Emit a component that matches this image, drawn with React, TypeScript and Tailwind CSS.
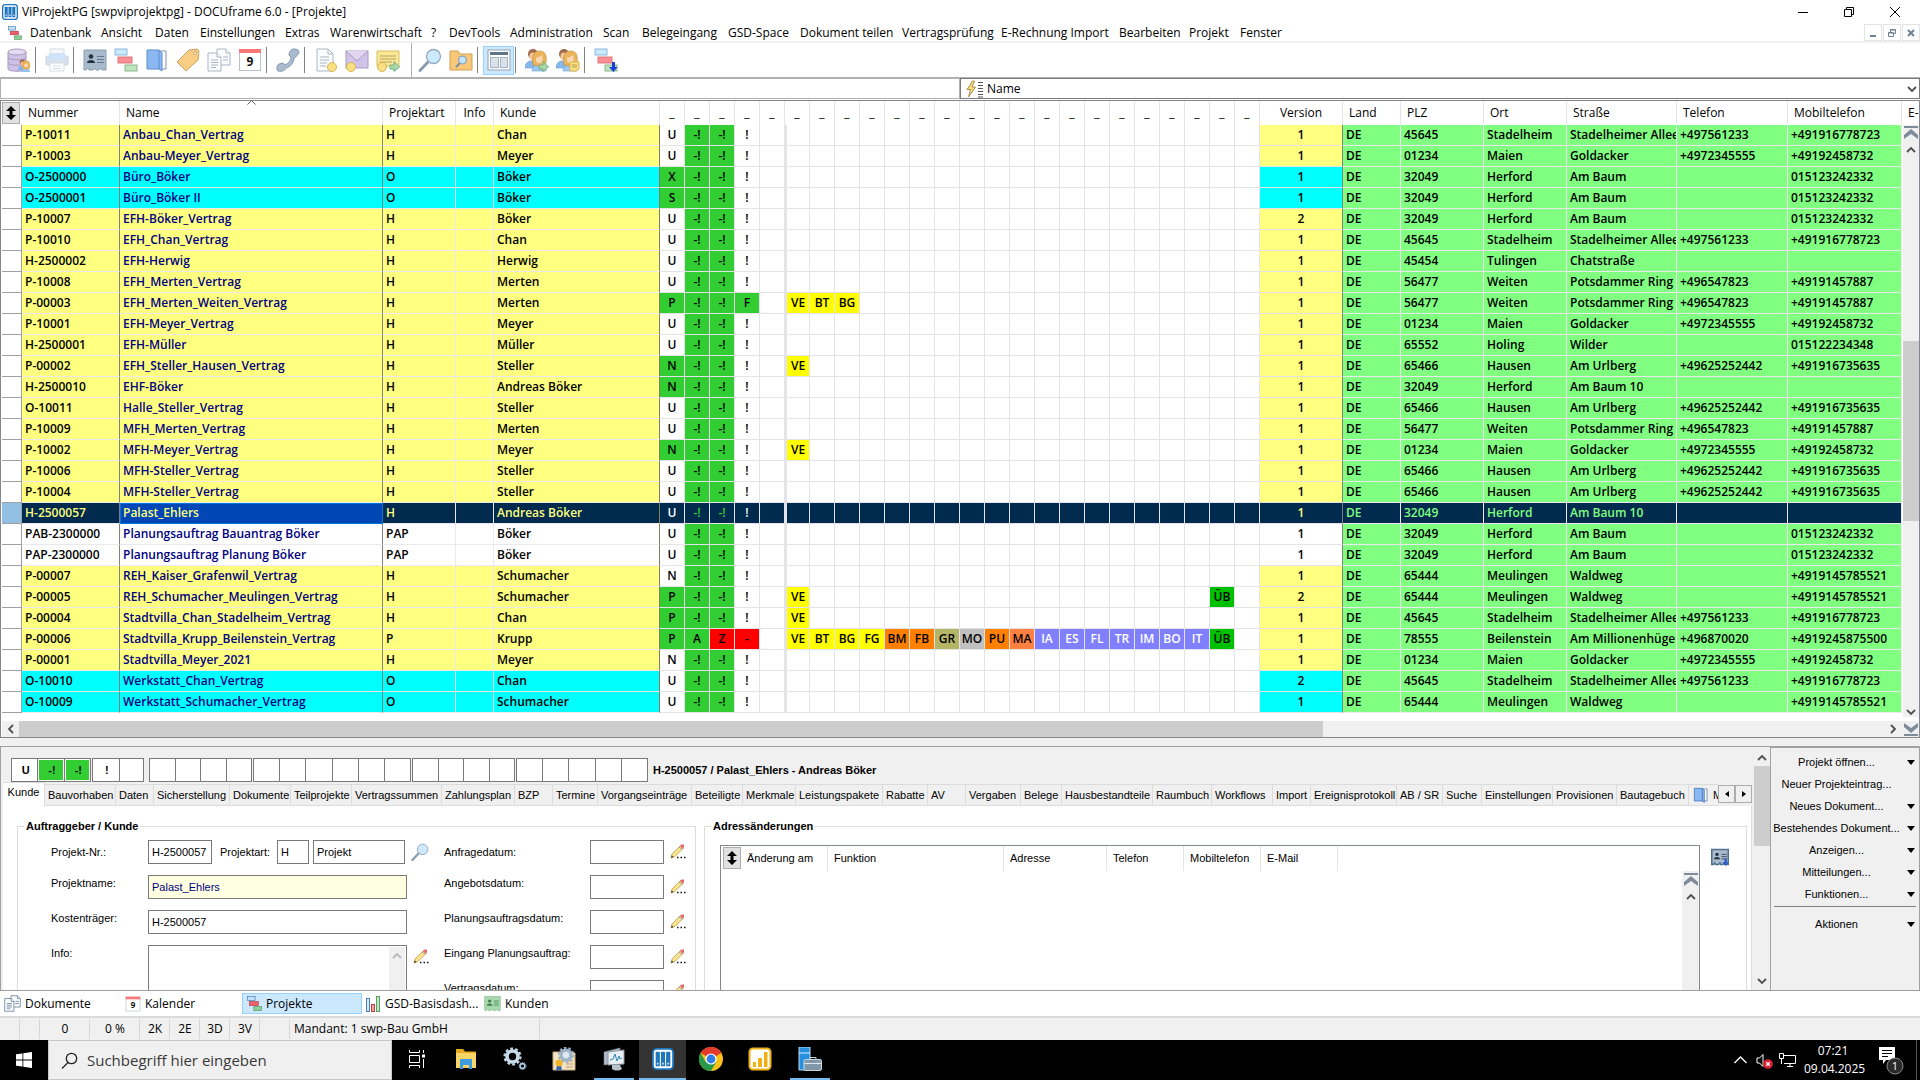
import { useState, type ReactNode } from "react";
import clsx from "clsx";

const SEGOE = "font-['Open_Sans','Noto_Sans',sans-serif]";
const ARIAL = "font-['Liberation_Sans',Arial,sans-serif]";

const MENU = [
  { label: "Datenbank", width: "w-[71px]" },
  { label: "Ansicht", width: "w-[54px]" },
  { label: "Daten", width: "w-[45px]" },
  { label: "Einstellungen", width: "w-[85px]" },
  { label: "Extras", width: "w-[45px]" },
  { label: "Warenwirtschaft", width: "w-[101px]" },
  { label: "?", width: "w-[18px]" },
  { label: "DevTools", width: "w-[61px]" },
  { label: "Administration", width: "w-[93px]" },
  { label: "Scan", width: "w-[39px]" },
  { label: "Belegeingang", width: "w-[86px]" },
  { label: "GSD-Space", width: "w-[72px]" },
  { label: "Dokument teilen", width: "w-[102px]" },
  { label: "Vertragsprüfung", width: "w-[99px]" },
  { label: "E-Rechnung Import", width: "w-[118px]" },
  { label: "Bearbeiten", width: "w-[70px]" },
  { label: "Projekt", width: "w-[51px]" },
  { label: "Fenster", width: "w-[60px]" },
];

type Address = { plz: string; ort: string; strasse: string; tel: string; mobil: string };

const ADDRESSES: Record<string, Address> = {
  chan: { plz: "45645", ort: "Stadelheim", strasse: "Stadelheimer Allee", tel: "+497561233", mobil: "+491916778723" },
  meyer: { plz: "01234", ort: "Maien", strasse: "Goldacker", tel: "+4972345555", mobil: "+49192458732" },
  baum: { plz: "32049", ort: "Herford", strasse: "Am Baum", tel: "", mobil: "015123242332" },
  baum10: { plz: "32049", ort: "Herford", strasse: "Am Baum 10", tel: "", mobil: "" },
  herwig: { plz: "45454", ort: "Tulingen", strasse: "Chatstraße", tel: "", mobil: "" },
  merten: { plz: "56477", ort: "Weiten", strasse: "Potsdammer Ring", tel: "+496547823", mobil: "+49191457887" },
  mueller: { plz: "65552", ort: "Holing", strasse: "Wilder", tel: "", mobil: "015122234348" },
  steller: { plz: "65466", ort: "Hausen", strasse: "Am Urlberg", tel: "+49625252442", mobil: "+491916735635" },
  waldweg: { plz: "65444", ort: "Meulingen", strasse: "Waldweg", tel: "", mobil: "+4919145785521" },
  krupp: { plz: "78555", ort: "Beilenstein", strasse: "Am Millionenhügel", tel: "+496870020", mobil: "+4919245875500" },
};

type Project = {
  nr: string;
  name: string;
  art: string;
  kunde: string;
  // first status; a trailing * marks it as reached (green)
  status: string;
  address: string;
  version?: number;
  rest?: string[];
  phases?: string[];
};

const PROJECTS: Project[] = [
  { nr: "P-10011", name: "Anbau_Chan_Vertrag", art: "H", kunde: "Chan", status: "U", address: "chan" },
  { nr: "P-10003", name: "Anbau-Meyer_Vertrag", art: "H", kunde: "Meyer", status: "U", address: "meyer" },
  { nr: "O-2500000", name: "Büro_Böker", art: "O", kunde: "Böker", status: "X*", address: "baum" },
  { nr: "O-2500001", name: "Büro_Böker II", art: "O", kunde: "Böker", status: "S*", address: "baum" },
  { nr: "P-10007", name: "EFH-Böker_Vertrag", art: "H", kunde: "Böker", status: "U", address: "baum", version: 2 },
  { nr: "P-10010", name: "EFH_Chan_Vertrag", art: "H", kunde: "Chan", status: "U", address: "chan" },
  { nr: "H-2500002", name: "EFH-Herwig", art: "H", kunde: "Herwig", status: "U", address: "herwig" },
  { nr: "P-10008", name: "EFH_Merten_Vertrag", art: "H", kunde: "Merten", status: "U", address: "merten" },
  { nr: "P-00003", name: "EFH_Merten_Weiten_Vertrag", art: "H", kunde: "Merten", status: "P*", address: "merten", rest: ["-!", "-!", "F"], phases: ["VE", "BT", "BG"] },
  { nr: "P-10001", name: "EFH-Meyer_Vertrag", art: "H", kunde: "Meyer", status: "U", address: "meyer" },
  { nr: "H-2500001", name: "EFH-Müller", art: "H", kunde: "Müller", status: "U", address: "mueller" },
  { nr: "P-00002", name: "EFH_Steller_Hausen_Vertrag", art: "H", kunde: "Steller", status: "N*", address: "steller", phases: ["VE"] },
  { nr: "H-2500010", name: "EHF-Böker", art: "H", kunde: "Andreas Böker", status: "N*", address: "baum10" },
  { nr: "O-10011", name: "Halle_Steller_Vertrag", art: "H", kunde: "Steller", status: "U", address: "steller" },
  { nr: "P-10009", name: "MFH_Merten_Vertrag", art: "H", kunde: "Merten", status: "U", address: "merten" },
  { nr: "P-10002", name: "MFH-Meyer_Vertrag", art: "H", kunde: "Meyer", status: "N*", address: "meyer", phases: ["VE"] },
  { nr: "P-10006", name: "MFH-Steller_Vertrag", art: "H", kunde: "Steller", status: "U", address: "steller" },
  { nr: "P-10004", name: "MFH-Steller_Vertrag", art: "H", kunde: "Steller", status: "U", address: "steller" },
  { nr: "H-2500057", name: "Palast_Ehlers", art: "H", kunde: "Andreas Böker", status: "U", address: "baum10" },
  { nr: "PAB-2300000", name: "Planungsauftrag Bauantrag Böker", art: "PAP", kunde: "Böker", status: "U", address: "baum" },
  { nr: "PAP-2300000", name: "Planungsauftrag Planung Böker", art: "PAP", kunde: "Böker", status: "U", address: "baum" },
  { nr: "P-00007", name: "REH_Kaiser_Grafenwil_Vertrag", art: "H", kunde: "Schumacher", status: "N", address: "waldweg" },
  { nr: "P-00005", name: "REH_Schumacher_Meulingen_Vertrag", art: "H", kunde: "Schumacher", status: "P*", address: "waldweg", version: 2, phases: ["VE", "ÜB"] },
  { nr: "P-00004", name: "Stadtvilla_Chan_Stadelheim_Vertrag", art: "H", kunde: "Chan", status: "P*", address: "chan", phases: ["VE"] },
  {
    nr: "P-00006", name: "Stadtvilla_Krupp_Beilenstein_Vertrag", art: "P", kunde: "Krupp", status: "P*", address: "krupp", rest: ["A", "Z", "-"],
    phases: ["VE", "BT", "BG", "FG", "BM", "FB", "GR", "MO", "PU", "MA", "IA", "ES", "FL", "TR", "IM", "BO", "IT", "ÜB"],
  },
  { nr: "P-00001", name: "Stadtvilla_Meyer_2021", art: "H", kunde: "Meyer", status: "N", address: "meyer" },
  { nr: "O-10010", name: "Werkstatt_Chan_Vertrag", art: "O", kunde: "Chan", status: "U", address: "chan", version: 2 },
  { nr: "O-10009", name: "Werkstatt_Schumacher_Vertrag", art: "O", kunde: "Schumacher", status: "U", address: "waldweg" },
];

const PHASES = ["VE", "BT", "BG", "FG", "BM", "FB", "GR", "MO", "PU", "MA", "IA", "ES", "FL", "TR", "IM", "BO", "IT", "ÜB", ""];

const PHASE_COLORS: Record<string, string> = {
  VE: "bg-[#ffff00]", BT: "bg-[#ffff00]", BG: "bg-[#ffff00]", FG: "bg-[#ffff00]",
  BM: "bg-[#ff8000]", FB: "bg-[#ff8000]", GR: "bg-[#b5b566]", MO: "bg-[#c0c0c0]",
  PU: "bg-[#ff8000]", MA: "bg-[#ff8040]",
  IA: "bg-[#8080ff] text-white", ES: "bg-[#8080ff] text-white", FL: "bg-[#8080ff] text-white",
  TR: "bg-[#8080ff] text-white", IM: "bg-[#8080ff] text-white", BO: "bg-[#8080ff] text-white",
  IT: "bg-[#8080ff] text-white", "ÜB": "bg-[#00c000]",
};

const STATUS_COLORS: Record<string, string> = {
  "-!": "bg-[#32cd32]", A: "bg-[#32cd32]", F: "bg-[#32cd32]", Z: "bg-[#ff0000]", "-": "bg-[#ff0000]",
};

const TABS = [
  { label: "Bauvorhaben", width: "w-[71px]" },
  { label: "Daten", width: "w-[38px]" },
  { label: "Sicherstellung", width: "w-[76px]" },
  { label: "Dokumente", width: "w-[61px]" },
  { label: "Teilprojekte", width: "w-[61px]" },
  { label: "Vertragssummen", width: "w-[90px]" },
  { label: "Zahlungsplan", width: "w-[73px]" },
  { label: "BZP", width: "w-[38px]" },
  { label: "Termine", width: "w-[45px]" },
  { label: "Vorgangseinträge", width: "w-[94px]" },
  { label: "Beteiligte", width: "w-[51px]" },
  { label: "Merkmale", width: "w-[53px]" },
  { label: "Leistungspakete", width: "w-[87px]" },
  { label: "Rabatte", width: "w-[45px]" },
  { label: "AV", width: "w-[38px]" },
  { label: "Vergaben", width: "w-[55px]" },
  { label: "Belege", width: "w-[41px]" },
  { label: "Hausbestandteile", width: "w-[91px]" },
  { label: "Raumbuch", width: "w-[59px]" },
  { label: "Workflows", width: "w-[61px]" },
  { label: "Import", width: "w-[38px]" },
  { label: "Ereignisprotokoll", width: "w-[86px]" },
  { label: "AB / SR", width: "w-[46px]" },
  { label: "Suche", width: "w-[39px]" },
  { label: "Einstellungen", width: "w-[71px]" },
  { label: "Provisionen", width: "w-[64px]" },
  { label: "Bautagebuch", width: "w-[72px]" },
];

/* ---------- icons ---------- */

type IconProps = { size?: number; children: ReactNode; box?: number };

const Icon = ({ size = 24, box = 24, children }: IconProps) => (
  <svg width={size} height={size} viewBox={`0 0 ${box} ${box}`} fill="none" className="shrink-0">
    {children}
  </svg>
);

const ProjectsShape = ({ arrow = false, strong = false }) => (
  <>
    <rect x="1" y="1" width="12" height="6" fill={strong ? "#bfe0f8" : "#c8e9fb"} stroke={strong ? "#3c78b4" : "#8fb8d8"} />
    <rect x="4" y="9" width="14" height="6" fill={strong ? "#f06068" : "#fb8e92"} stroke={strong ? "#b03038" : "#d8797d"} />
    <rect x="11" y="17" width="12" height="6" fill={strong ? "#90d098" : "#bde3bf"} stroke={strong ? "#409050" : "#8bb78e"} />
    {arrow && <path d="M18 14h3v5h2.500L19.500 24 15 19h3z" fill="#1a3fd8" />}
  </>
);

const ProjectsIcon = ({ size = 24, arrow = false, strong = false }) => (
  <Icon size={size}>
    <ProjectsShape arrow={arrow} strong={strong} />
  </Icon>
);

const BookIcon = ({ size = 24, strong = false }) => (
  <Icon size={size}>
    <path d="M14 3h7v18h-7z" fill="#fdfdfd" stroke={strong ? "#4a6890" : "#7e93ad"} />
    <path d="M2 2h12l3 3v18l-3-2H2z" fill="#8bb8f3" stroke={strong ? "#2f66b4" : "#5f8ccc"} />
    <path d="M14 2v19" stroke={strong ? "#2f66b4" : "#5f8ccc"} />
  </Icon>
);

const DocsIcon = ({ size = 24, strong = false }) => (
  <Icon size={size}>
    <g stroke={strong ? "#54708f" : "#a9b5c3"} fill="#fbfcfd">
      <path d="M10 1h9l4 4v12H10z" />
      <path d="M19 1v4h4M16 9h5M16 12h5" />
      <path d="M1 5h9l4 4v14H1z" />
      <path d="M10 5v4h4M4 12h7M4 14.500h7M4 17h7M4 19.500h5" />
    </g>
  </Icon>
);

const CalendarIcon = ({ size = 24 }) => (
  <Icon size={size}>
    <rect x="1.500" y="1.500" width="21" height="21" fill="#fff" stroke="#b9c2cc" />
    <rect x="1" y="1" width="22" height="4" fill="#f87878" />
    <text x="12" y="18" textAnchor="middle" fontSize="12" fontWeight="700" fontFamily="Open Sans" fill="#111">9</text>
  </Icon>
);

const CardIcon = ({ size = 24, green = false, strong = false }) => {
  const ink = green ? "#3b8048" : "#26323f";
  const edge = green ? "#88bd90" : strong ? "#50708f" : "#8c9fb5";
  return (
    <Icon size={size}>
      <path d="M1 2h22v20h-4l-1-2-2 2h-3l-1-2-2 2H6l-1-2-2 2H1z" fill={green ? "#a8d8ae" : "#a9bacd"} stroke={edge} strokeWidth={strong ? 2 : 1} />
      <circle cx="8" cy="8.500" r="2.300" fill={ink} />
      <path d="M4 15c0-4 8-4 8 0z" fill={ink} />
      <path d="M14 8.500h7M14 11.500h7M14 14.500h7" stroke={green || strong ? ink : "#66788d"} />
      {strong && <path d="M18 14h3v5h2.500L19.500 24 15 19h3z" fill="#2a5fd0" />}
    </Icon>
  );
};

const MagnifierIcon = ({ size = 24 }) => (
  <Icon size={size}>
    <path d="M10 14L2 22.500" stroke="#8b9cb0" strokeWidth="3" strokeLinecap="round" />
    <circle cx="15.500" cy="8.500" r="7" fill="#cdeafd" stroke="#93aabf" strokeWidth="1.300" />
  </Icon>
);

const PencilIcon = () => (
  <Icon size={16} box={16}>
    <path d="M1 14l1-4L10.500 1.500l3 2.500L5 12.500z" fill="#fbe38b" stroke="#b59d57" strokeWidth=".8" />
    <path d="M10 2l1.500-1.500h2.500V3l-1.500 2z" fill="#e46b70" />
    <path d="M9 3l3 2.500" stroke="#98a8b8" />
    <path d="M1 14l.8-2.500L3.500 13z" fill="#333" />
    <path d="M7 13.500h1.500M10.500 13.500H12M14 13.500h1.500" stroke="#111" strokeWidth="1.600" />
  </Icon>
);

const PeopleShape = () => (
  <>
    <path d="M0 20c0-4 2-6.500 5-7h5v7z" fill="#86b8ec" stroke="#6c9fd4" strokeWidth=".6" />
    <circle cx="8" cy="6" r="5" fill="#a0684a" />
    <ellipse cx="7.500" cy="8.500" rx="3" ry="4" fill="#f3c9a0" />
    <path d="M7 23c0-4 2-6 7-6s7 2 7 6z" fill="#9cc8f4" stroke="#6c9fd4" strokeWidth=".6" />
    <path d="M8 17C7 10 7 3 14.500 3S22 10 20.500 17l-4 1h-4z" fill="#eab45c" stroke="#c08c40" strokeWidth=".6" />
    <path d="M11 10c1-1 4-1 6-3 1 3 1 8-2.500 8S11 13 11 10z" fill="#f8d8b4" />
  </>
);

const Coin = ({ x, y }: { x: number; y: number }) => <circle cx={x} cy={y} r="4.500" fill="#fbe083" stroke="#d3b453" />;
const GreenArrow = () => <path d="M14 17h4v-3.500l5.500 5.500-5.500 4.500V21h-4z" fill="#a6d8aa" stroke="#78ae7e" />;

const DatabaseIcon = () => (
  <Icon>
    <path d="M1 4v17c0 3 18 3 18 0V4z" fill="#d0c1e6" stroke="#a99abf" />
    <ellipse cx="10" cy="4" rx="9" ry="3" fill="#e4dbf2" stroke="#a99abf" />
    <path d="M1 9.500c0 3 18 3 18 0M1 15c0 3 18 3 18 0" stroke="#a99abf" />
    <g transform="translate(11 11) scale(.56)"><PeopleShape /></g>
  </Icon>
);

const PrinterIcon = () => (
  <Icon>
    <path d="M5 1h14v8H5z" fill="#f6f8fa" stroke="#d4dae1" />
    <rect x="1" y="8" width="22" height="9" rx="1.500" fill="#d9e1ea" stroke="#c6d0da" />
    <rect x="4" y="5" width="16" height="7" fill="#cfe4fa" />
    <path d="M5 15h14v8H5z" fill="#fff" stroke="#d4dae1" />
    <path d="M8 18h8M8 20.500h8" stroke="#d4dae1" />
  </Icon>
);

const TagIcon = () => (
  <Icon>
    <path d="M1 14L13 2l8-1 2 2-1 9-12 11z" fill="#f8ce84" stroke="#c9a25f" />
    <circle cx="19" cy="5" r="1.500" fill="#fff" stroke="#c9a25f" />
  </Icon>
);

const PhoneIcon = () => (
  <Icon>
    <path d="M2 23c-2-3-1-6 1-7l4-1 2 2C13 15 15 12 15 9l-2-2c0-3 2-6 5-6 3 0 5 1 5 3-1 3-3 5-5 6 0 5-4 9-8 10-1 2-3 4-8 3z" fill="#a9bccf" stroke="#8397ab" />
  </Icon>
);

const NewDocIcon = () => (
  <Icon>
    <path d="M3 1h11l5 5v17H3z" fill="#fbfcfd" stroke="#a9b5c3" />
    <path d="M14 1v5h5M6 9h9M6 12h9M6 15h7M6 18h6" stroke="#a9b5c3" />
    <Coin x={18} y={19} />
  </Icon>
);

const MailIcon = () => (
  <Icon>
    <rect x="1" y="3" width="22" height="17" fill="#d2c4e8" stroke="#a99abf" />
    <path d="M1 3l11 10L23 3" stroke="#a99abf" fill="#e0d6f0" />
    <Coin x={6} y={19} />
  </Icon>
);

const NoteIcon = () => (
  <Icon>
    <path d="M1 3h22v15H1z" fill="#fbe795" stroke="#d6be62" />
    <path d="M4 8h16M4 11h16M4 14h12" stroke="#b7a35c" />
    <Coin x={6} y={19} />
    <GreenArrow />
  </Icon>
);

const FolderIcon = () => (
  <Icon>
    <path d="M1 3h8l2 3h12v16H1z" fill="#f8c878" stroke="#cf9f54" />
    <path d="M11 15l-4 4" stroke="#7890a8" strokeWidth="2" />
    <circle cx="13.500" cy="12" r="4" fill="#c4e4fb" stroke="#7e9cb8" />
  </Icon>
);

const LayoutIcon = () => (
  <Icon>
    <rect x="1" y="2" width="22" height="20" fill="#fff" stroke="#8fa2b5" />
    <rect x="3" y="4" width="18" height="3" fill="#5f7388" />
    <rect x="3.500" y="9.500" width="8" height="10" fill="#d9e2ea" stroke="#a6b4c2" />
    <rect x="13.500" y="9.500" width="7" height="10" fill="#d9e2ea" stroke="#a6b4c2" />
  </Icon>
);

const PeopleArrowIcon = () => <Icon><PeopleShape /><GreenArrow /></Icon>;
const PeopleNoteIcon = () => (
  <Icon>
    <PeopleShape />
    <path d="M14 14h9v7l-3 2h-6z" fill="#fbe083" stroke="#d3b453" />
    <path d="M16 17h5M16 19h5" stroke="#b79c48" />
  </Icon>
);

const BinderIcon = ({ size = 24 }) => (
  <Icon size={size}>
    <rect x="1" y="1" width="22" height="22" rx="4" fill="#fff" stroke="#1f76bd" strokeWidth="2" />
    <rect x="4" y="4" width="4.600" height="16" rx="1" fill="#1f76bd" />
    <rect x="9.700" y="4" width="4.600" height="16" rx="1" fill="#1f76bd" />
    <rect x="15.400" y="4" width="4.600" height="16" rx="1" fill="#1f76bd" />
    <path d="M6.300 16v2M12 16v2M17.700 16v2" stroke="#fff" strokeWidth="1.500" />
  </Icon>
);

const ChartIcon = () => (
  <Icon size={16} box={16}>
    <rect x="1.500" y="2.500" width="3" height="13" fill="#d8e8fa" stroke="#4a80b8" />
    <rect x="6.500" y="8.500" width="3" height="7" fill="#f8a0a4" stroke="#b84048" />
    <rect x="11.500" y=".5" width="3" height="15" fill="#c0e4c4" stroke="#58a064" />
  </Icon>
);

const Chevron = ({ dir, color = "#505050" }: { dir: "up" | "down" | "left" | "right"; color?: string }) => {
  const d = { up: "M1 7l4-4 4 4", down: "M1 3l4 4 4-4", left: "M7 1L3 5l4 4", right: "M3 1l4 4-4 4" }[dir];
  return (
    <svg width="10" height="10" viewBox="0 0 10 10" fill="none" className="shrink-0">
      <path d={d} stroke={color} strokeWidth="1.800" />
    </svg>
  );
};

const DoubleChevron = ({ down = false }) => (
  <svg width="16" height="16" viewBox="0 0 16 16" fill="#7d8b9b" className={clsx("shrink-0", down && "rotate-180")}>
    <path d="M1 1h14v2H1zM8 4l7 6v4L8 9l-7 5v-4z" />
  </svg>
);

const SortButton = () => (
  <button aria-label="Sortierung" className="flex h-[22px] w-[18px] items-center justify-center border border-[#adadad] bg-[#e1e1e1]">
    <svg width="10" height="14" viewBox="0 0 10 14"><path d="M5 0l5 5H6.500v4H10l-5 5-5-5h3.500V5H0z" fill="#000" /></svg>
  </button>
);

/* ---------- window chrome ---------- */

function TitleBar() {
  return (
    <header className="flex h-6 items-center pr-5 pl-[2px] text-xs">
      <BinderIcon size={16} />
      <h1 className="ml-1 flex-1">ViProjektPG [swpviprojektpg] - DOCUframe 6.0 - [Projekte]</h1>
      <div className="flex gap-9">
        <button aria-label="Minimieren">
          <svg width="10" height="10" stroke="#000"><path d="M0 5.500h10" /></svg>
        </button>
        <button aria-label="Verkleinern">
          <svg width="10" height="10" stroke="#000" fill="none"><path d="M.5 2.500h7v7h-7zM2.500 2V.5h7v7H8" /></svg>
        </button>
        <button aria-label="Schließen">
          <svg width="10" height="10" stroke="#000"><path d="M0 0l10 10M10 0L0 10" /></svg>
        </button>
      </div>
    </header>
  );
}

function MenuBar() {
  const mdi = "flex h-[17px] w-[18px] items-center justify-center border border-[#e4e4e4]";
  return (
    <nav className="flex h-[19px] items-center border-b-2 border-[#f0f0f0] pl-2 text-xs">
      <ProjectsIcon size={14} strong />
      <div className="ml-2 flex flex-1">
        {MENU.map(item => (
          <button key={item.label} className={clsx("text-left whitespace-nowrap", item.width)}>{item.label}</button>
        ))}
      </div>
      <div className="flex gap-[1px] text-[#6f8190]">
        <button aria-label="Fenster minimieren" className={mdi}>
          <svg width="8" height="8" fill="currentColor"><path d="M1 6h6v2H1z" /></svg>
        </button>
        <button aria-label="Fenster verkleinern" className={mdi}>
          <svg width="8" height="8" stroke="currentColor" fill="none"><path d="M.5 3.500h5v4h-5zM.5 4h5M2.500 3V.5h5v4H6M2.500 1h5" /></svg>
        </button>
        <button aria-label="Fenster schließen" className={mdi}>
          <svg width="8" height="8" stroke="currentColor" strokeWidth="2"><path d="M1 1l6 6M7 1L1 7" /></svg>
        </button>
      </div>
    </nav>
  );
}

const ToolButton = ({ label, active, children }: { label: string; active?: boolean; children: ReactNode }) => (
  <button
    aria-label={label}
    className={clsx("flex h-[29px] w-[31px] items-center justify-center", active && "border border-[#99d1ff] bg-[#cce8ff]")}
  >
    {children}
  </button>
);

const ToolSeparator = () => <div className="mr-[5px] ml-[1px] h-[26px] border-l border-[#808080]" />;

function Toolbar() {
  return (
    <div className="flex h-[34px] items-center pl-[3px]">
      <ToolButton label="Datenbank"><DatabaseIcon /></ToolButton>
      <ToolSeparator />
      <ToolButton label="Drucken"><PrinterIcon /></ToolButton>
      <ToolSeparator />
      <ToolButton label="Adressen"><CardIcon /></ToolButton>
      <ToolButton label="Projekte"><ProjectsIcon /></ToolButton>
      <ToolButton label="Buch"><BookIcon /></ToolButton>
      <ToolButton label="Artikel"><TagIcon /></ToolButton>
      <ToolButton label="Dokumente"><DocsIcon /></ToolButton>
      <ToolButton label="Kalender"><CalendarIcon /></ToolButton>
      <ToolSeparator />
      <ToolButton label="Telefon"><PhoneIcon /></ToolButton>
      <ToolSeparator />
      <ToolButton label="Neues Dokument"><NewDocIcon /></ToolButton>
      <ToolButton label="Neue E-Mail"><MailIcon /></ToolButton>
      <ToolButton label="Neue Notiz"><NoteIcon /></ToolButton>
      <div className="mr-[2px] ml-2 h-full border-l border-[#b0b0b0]" />
      <ToolButton label="Suchen"><MagnifierIcon /></ToolButton>
      <ToolButton label="Ordner suchen"><FolderIcon /></ToolButton>
      <ToolSeparator />
      <ToolButton label="Ansicht" active><LayoutIcon /></ToolButton>
      <ToolSeparator />
      <ToolButton label="Weiterleiten"><PeopleArrowIcon /></ToolButton>
      <ToolButton label="Notiz an Kontakt"><PeopleNoteIcon /></ToolButton>
      <ToolSeparator />
      <ToolButton label="Projekt ablegen"><ProjectsIcon arrow /></ToolButton>
    </div>
  );
}

function SearchRow() {
  const [query, setQuery] = useState("");
  return (
    <div className="flex h-[22px] border-t border-[#b0b0b0]">
      <input
        aria-label="Suchbegriff"
        value={query}
        onChange={e => setQuery(e.target.value)}
        className="w-1/2 border border-[#b0b0b0] px-2 text-xs outline-none"
      />
      <div className="flex w-1/2 items-center border border-[#7a7a7a] pr-[2px] pl-[5px]">
        <svg width="18" height="18" viewBox="0 0 18 18">
          <path d="M6.500 1L1 9.500h3.500L2.500 17 9.500 7H6L8.500 1z" fill="#fbdc7c" stroke="#a88f4d" />
          <path d="M12 2.500h5M12 5.500h5M12 8.500h5M12 11.500h5M12 14.500h5M12 17h5" stroke="#555" />
        </svg>
        <select aria-label="Suchfeld" className="h-full flex-1 appearance-none bg-transparent pl-[3px] text-xs outline-none">
          <option>Name</option>
        </select>
        <Chevron dir="down" />
      </div>
    </div>
  );
}

/* ---------- project table ---------- */

const TH = "relative h-6 overflow-hidden border-r border-[#e5e5e5] px-[6px] text-left font-normal whitespace-nowrap";
const THC = "h-6 overflow-hidden border-r border-[#e5e5e5] p-0 text-center font-normal whitespace-nowrap";
const TD = "h-[21px] overflow-hidden border-r border-b border-[#ebe9ed] p-0 pl-[3px] whitespace-nowrap";
const TDC = "h-[21px] overflow-hidden border-r border-b border-[#e3e3e8] p-0 text-center whitespace-nowrap";

function ProjectRow({ project, selected, onSelect }: { project: Project; selected: boolean; onSelect: () => void }) {
  const address = ADDRESSES[project.address];
  const plain = project.art === "PAP";
  const blue = project.art === "O";
  const left = selected ? "bg-[#002b4f] text-[#ffff80]" : plain ? "bg-white" : blue ? "bg-[#00ffff]" : "bg-[#ffff80]";
  const right = selected ? "bg-[#002b4f] text-[#80ff80]" : "bg-[#80ff80]";
  const first = project.status.replace("*", "");
  const firstDone = project.status.endsWith("*");
  const rest = project.rest ?? ["-!", "-!", "!"];

  return (
    <tr onClick={onSelect}>
      <td className={clsx("h-[21px] border-r border-b border-[#a0a0a0] p-0", selected ? "bg-[#92c0e4]" : "bg-white")} />
      <td className={clsx(TD, left, "border-r-[#808080]")}>{project.nr}</td>
      <td
        className={clsx(
          TD,
          "border-r-[#808080]",
          selected ? "bg-[#0046b4] text-[#ffff80] outline-1 -outline-offset-1 outline-[#0078d7]" : [left, "text-[#000080]"]
        )}
      >
        {project.name}
      </td>
      <td className={clsx(TD, left)}>{project.art}</td>
      <td className={clsx(TD, left)} />
      <td className={clsx(TD, left, "border-r-[#808060]")}>{project.kunde}</td>
      <td className={clsx(TDC, firstDone ? "bg-[#32cd32]" : selected ? "bg-[#002b4f] text-white" : "bg-white")}>{first}</td>
      {rest.map((s, i) => (
        <td
          key={i}
          className={clsx(TDC, selected ? ["bg-[#002b4f]", s === "-!" ? "text-[#32cd32]" : "text-white"] : STATUS_COLORS[s])}
        >
          {s}
        </td>
      ))}
      <td className={clsx(TDC, selected && "bg-[#002b4f]")} />
      {PHASES.map((phase, i) => {
        const reached = phase !== "" && project.phases?.includes(phase);
        return (
          <td
            key={i}
            className={clsx(TDC, i === 0 && "border-l-2", selected && "bg-[#002b4f]", reached && PHASE_COLORS[phase])}
          >
            {reached ? phase : ""}
          </td>
        );
      })}
      <td className={clsx(TDC, left, "border-r-[#808080]")}>{project.version ?? 1}</td>
      <td className={clsx(TD, right)}>DE</td>
      <td className={clsx(TD, right)}>{address.plz}</td>
      <td className={clsx(TD, right)}>{address.ort}</td>
      <td className={clsx(TD, right)}>{address.strasse}</td>
      <td className={clsx(TD, right)}>{address.tel}</td>
      <td className={clsx(TD, right)}>{address.mobil}</td>
      <td />
    </tr>
  );
}

function ProjectTable() {
  const [selected, setSelected] = useState("H-2500057");
  return (
    <section className="relative mt-[1px] shrink-0 overflow-hidden border border-[#828790] pl-[1px]">
      <table className="w-[1936px] table-fixed border-separate border-spacing-0 text-xs">
        <colgroup>
          <col className="w-[20px]" />
          <col className="w-[98px]" />
          <col className="w-[263px]" />
          <col className="w-[73px]" />
          <col className="w-[38px]" />
          <col className="w-[166px]" />
          {[0, 1, 2, 3, 4].map(i => <col key={i} className="w-[25px]" />)}
          {PHASES.map((_, i) => <col key={i} className="w-[25px]" />)}
          <col className="w-[83px]" />
          <col className="w-[58px]" />
          <col className="w-[83px]" />
          <col className="w-[83px]" />
          <col className="w-[110px]" />
          <col className="w-[111px]" />
          <col className="w-[114px]" />
          <col />
        </colgroup>
        <thead>
          <tr>
            <th className="h-6 p-0"><SortButton /></th>
            <th className={TH}>Nummer</th>
            <th className={TH}>
              <span className="absolute inset-x-0 -top-[2px] flex justify-center">
                <svg width="9" height="6" viewBox="0 0 9 6" fill="none" stroke="#606060"><path d="M.5 5.500l4-4 4 4" /></svg>
              </span>
              Name
            </th>
            <th className={TH}>Projektart</th>
            <th className={THC}>Info</th>
            <th className={TH}>Kunde</th>
            {[0, 1, 2, 3, 4].map(i => <th key={i} className={THC}>_</th>)}
            {PHASES.map((_, i) => <th key={i} className={THC}>_</th>)}
            <th className={THC}>Version</th>
            <th className={TH}>Land</th>
            <th className={TH}>PLZ</th>
            <th className={TH}>Ort</th>
            <th className={TH}>Straße</th>
            <th className={TH}>Telefon</th>
            <th className={TH}>Mobiltelefon</th>
            <th className={TH}>E-Mail</th>
          </tr>
        </thead>
        <tbody className="font-semibold">
          {PROJECTS.map(p => (
            <ProjectRow key={p.nr} project={p} selected={p.nr === selected} onSelect={() => setSelected(p.nr)} />
          ))}
        </tbody>
      </table>

      {/* vertical scrollbar lies over the last column */}
      <div className="absolute top-6 right-0 bottom-5 flex w-4 flex-col items-center justify-between bg-[#f0f0f0]">
        <div className="flex flex-col items-center gap-1">
          <DoubleChevron />
          <Chevron dir="up" />
        </div>
        <div className="absolute top-[216px] h-[180px] w-full bg-[#cdcdcd]" />
        <Chevron dir="down" />
      </div>

      <div className="mt-2 flex h-4 items-center bg-[#f0f0f0]">
        <div className="flex w-[17px] justify-center"><Chevron dir="left" /></div>
        <div className="h-full w-[68%] bg-[#cdcdcd]" />
        <div className="flex-1" />
        <Chevron dir="right" />
        <div className="ml-[5px]"><DoubleChevron down /></div>
      </div>
    </section>
  );
}

/* ---------- detail panel ---------- */

const STATUS_GROUPS = [
  { cells: ["", "", "", ""], width: "w-[103px]" },
  { cells: ["", "", "", "", "", ""], width: "w-[158px]" },
  { cells: ["", "", "", ""], width: "w-[103px]" },
  { cells: ["", "", "", "", ""], width: "w-[132px]" },
];

function StatusStrip() {
  return (
    <div className="flex h-6 pl-2 text-[11px] font-bold">
      <div className="mr-[1px] flex w-[80px] border border-[#7a7a7a] bg-white">
        <span className="flex-1 pl-[2px] text-center leading-[22px]">U</span>
        <span className="flex-1 border-l border-[#7a7a7a] p-[1px]"><span className="block h-full bg-[#32cd32] pl-[2px] text-center leading-5">-!</span></span>
        <span className="flex-1 border-l border-[#7a7a7a] p-[1px]"><span className="block h-full bg-[#32cd32] pl-[2px] text-center leading-5">-!</span></span>
      </div>
      <div className="mr-[5px] flex w-[52px] border border-[#7a7a7a] bg-white">
        <span className="flex-1 pl-[2px] text-center leading-[22px]">!</span>
        <span className="flex-1 border-l border-[#7a7a7a]" />
      </div>
      {STATUS_GROUPS.map((group, g) => (
        <div key={g} className={clsx("mr-[1px] flex divide-x divide-[#7a7a7a] border border-[#7a7a7a] bg-white", group.width)}>
          {group.cells.map((_, i) => <span key={i} className="flex-1" />)}
        </div>
      ))}
      <h2 className="ml-1 leading-6">H-2500057 / Palast_Ehlers - Andreas Böker</h2>
    </div>
  );
}

function TabBar() {
  const arrow = "mb-[3px] flex h-[18px] w-[17px] shrink-0 items-center justify-center border border-[#adadad]";
  return (
    <div className="flex h-6 items-end overflow-hidden text-[11px]">
      <button className="h-6 w-[42px] shrink-0 border-t border-r border-[#dcdcdc] bg-white pb-1 text-center">Kunde</button>
      {TABS.map(tab => (
        <button
          key={tab.label}
          className={clsx("h-[22px] shrink-0 border-y border-r border-[#dcdcdc] pl-[3px] text-left whitespace-nowrap", tab.width)}
        >
          {tab.label}
        </button>
      ))}
      <button className="flex h-[22px] min-w-0 flex-1 items-center gap-1 overflow-hidden border-y border-[#dcdcdc] pl-1">
        <BookIcon size={16} strong />
        M
      </button>
      <button aria-label="Register zurück" className={arrow}>
        <svg width="4" height="6"><path d="M4 0v6L0 3z" /></svg>
      </button>
      <button aria-label="Register vor" className={arrow}>
        <svg width="4" height="6"><path d="M0 0v6l4-3z" /></svg>
      </button>
    </div>
  );
}

const FIELD = "border border-[#7a7a7a] bg-white px-[3px] text-[11px] outline-none";

const DATE_FIELDS = ["Anfragedatum:", "Angebotsdatum:", "Planungsauftragsdatum:", "Eingang Planungsauftrag:", "Vertragsdatum:"];

function CustomerGroup() {
  return (
    <fieldset className="ml-[14px] flex w-[679px] shrink-0 border border-[#dcdcdc] pl-[33px]">
      <legend className="-ml-[27px] px-[2px] font-bold">Auftraggeber / Kunde</legend>
      <div className="flex w-[393px] shrink-0 flex-col pt-[5px]">
        <div className="flex h-[35px]">
          <label htmlFor="nr" className="w-[97px] leading-6">Projekt-Nr.:</label>
          <input id="nr" defaultValue="H-2500057" className={clsx(FIELD, "h-6 w-16")} />
          <label htmlFor="art" className="w-[65px] pl-2 leading-6">Projektart:</label>
          <input id="art" defaultValue="H" className={clsx(FIELD, "h-6 w-8")} />
          <input aria-label="Projektart Bezeichnung" defaultValue="Projekt" className={clsx(FIELD, "ml-1 h-6 w-[92px]")} />
          <button aria-label="Projektart suchen" className="ml-[6px] flex h-6 items-center"><MagnifierIcon size={18} /></button>
        </div>
        <div className="flex h-[35px]">
          <label htmlFor="name" className="w-[97px] leading-4">Projektname:</label>
          <input id="name" defaultValue="Palast_Ehlers" className="h-6 w-[259px] border border-[#7a7a7a] bg-[#ffffe1] px-[3px] text-[11px] text-[#000080] outline-none" />
        </div>
        <div className="flex h-[35px]">
          <label htmlFor="kosten" className="w-[97px] leading-4">Kostenträger:</label>
          <input id="kosten" defaultValue="H-2500057" className={clsx(FIELD, "h-6 w-[259px]")} />
        </div>
        <div className="flex">
          <label htmlFor="info" className="w-[97px] leading-4">Info:</label>
          <div className="flex h-[100px] w-[259px] border border-[#7a7a7a] p-[1px]">
            <textarea id="info" className="min-w-0 flex-1 resize-none outline-none" />
            <div className="flex w-4 justify-center bg-[#f0f0f0] pt-1"><Chevron dir="up" color="#b8b8b8" /></div>
          </div>
          <button aria-label="Info bearbeiten" className="ml-[6px] flex h-6 items-center self-start"><PencilIcon /></button>
        </div>
      </div>
      <div className="flex flex-col pt-[5px]">
        {DATE_FIELDS.map((label, i) => (
          <div key={label} className="flex h-[35px]">
            <label htmlFor={label} className={clsx("w-[146px]", i === 0 ? "leading-6" : "leading-4")}>{label}</label>
            <input id={label} className={clsx(FIELD, "h-6 w-[74px]")} />
            <button aria-label={label + " bearbeiten"} className="ml-[6px] flex h-6 items-center"><PencilIcon /></button>
          </div>
        ))}
      </div>
    </fieldset>
  );
}

function AddressGroup() {
  const th = "border-r border-[#e5e5e5] px-[6px] text-left font-normal";
  return (
    <fieldset className="mr-1 ml-2 flex min-w-0 flex-1 border border-[#dcdcdc] pt-[10px] pl-[15px]">
      <legend className="-ml-[9px] px-[2px] font-bold">Adressänderungen</legend>
      <div className="flex min-w-0 flex-1 flex-col border border-[#828790]">
        <table className="w-[617px] table-fixed border-separate border-spacing-0 pl-[2px]">
          <thead>
            <tr className="h-[25px]">
              <th className="w-[18px] p-0"><SortButton /></th>
              <th className={clsx(th, "w-[87px]")}>Änderung am</th>
              <th className={clsx(th, "w-[176px]")}>Funktion</th>
              <th className={clsx(th, "w-[103px]")}>Adresse</th>
              <th className={clsx(th, "w-[77px]")}>Telefon</th>
              <th className={clsx(th, "w-[77px]")}>Mobiltelefon</th>
              <th className={th}>E-Mail</th>
            </tr>
          </thead>
        </table>
        <div className="flex w-[17px] flex-1 flex-col items-center gap-1 self-end bg-[#f0f0f0] pt-[1px]">
          <DoubleChevron />
          <Chevron dir="up" />
        </div>
      </div>
      <button aria-label="Adresse übernehmen" className="mr-[17px] ml-[11px] self-start pt-[3px]"><CardIcon size={18} strong /></button>
    </fieldset>
  );
}

const ACTIONS = [
  { label: "Projekt öffnen...", menu: true },
  { label: "Neuer Projekteintrag...", menu: false },
  { label: "Neues Dokument...", menu: true },
  { label: "Bestehendes Dokument...", menu: true },
  { label: "Anzeigen...", menu: true },
  { label: "Mitteilungen...", menu: true },
  { label: "Funktionen...", menu: true },
];

const ActionButton = ({ label, menu }: { label: string; menu: boolean }) => (
  <button className="flex h-[22px] w-full items-center whitespace-nowrap">
    <span className="flex-1 text-center">{label}</span>
    <span className="flex w-[17px] justify-center">{menu && <svg width="8" height="5"><path d="M0 0h8L4 5z" /></svg>}</span>
  </button>
);

function DetailPanel() {
  return (
    <section className={clsx("mt-2 flex min-h-0 flex-1 overflow-hidden border border-[#a0a0a0] text-[11px]", ARIAL)}>
      <div className="flex min-w-0 flex-1 flex-col overflow-hidden pt-[11px] pl-[2px]">
        <StatusStrip />
        <TabBar />
        <div className="flex min-h-0 flex-1 overflow-hidden border-r border-[#dcdcdc] bg-white">
          <div className="flex h-[320px] min-w-0 flex-1 pt-3">
            <CustomerGroup />
            <AddressGroup />
          </div>
        </div>
      </div>
      <div className="ml-[2px] flex w-4 flex-col items-center pt-[6px] pb-1">
        <Chevron dir="up" />
        <div className="mt-[3px] h-20 w-full bg-[#cdcdcd]" />
        <div className="flex-1" />
        <Chevron dir="down" />
      </div>
      <aside className="w-[149px] border-t border-l border-[#a0a0a0] pt-[3px]">
        {ACTIONS.map(a => <ActionButton key={a.label} label={a.label} menu={a.menu} />)}
        <hr className="mx-[3px] mt-[1px] mb-[6px] border-[#808080]" />
        <ActionButton label="Aktionen" menu />
      </aside>
    </section>
  );
}

/* ---------- bottom bars ---------- */

function WindowTabs() {
  return (
    <nav className="flex h-[27px] items-center border-b-2 border-[#dadada] bg-white text-xs">
      <button className="flex w-[121px] items-center gap-1 pl-1"><DocsIcon size={17} strong />Dokumente</button>
      <button className="flex w-[121px] items-center gap-1 pl-1"><CalendarIcon size={16} />Kalender</button>
      <button className="flex h-[21px] w-[120px] items-center gap-1 border border-[#99d1ff] bg-[#cce8ff] pl-1"><ProjectsIcon size={15} strong />Projekte</button>
      <button className="flex w-[122px] items-center gap-1 pl-[3px] whitespace-nowrap"><ChartIcon />GSD-Basisdash...</button>
      <button className="flex items-center gap-1"><CardIcon size={17} green />Kunden</button>
    </nav>
  );
}

function StatusBar() {
  const cell = "flex h-5 items-center justify-center border-r border-[#d7d7d7] pl-[1px]";
  return (
    <footer className="flex h-[22px] items-center text-xs">
      <div className={clsx(cell, "w-5")} />
      <div className={clsx(cell, "w-5")} />
      <div className={clsx(cell, "w-[50px]")}>0</div>
      <div className={clsx(cell, "w-[50px]")}>0 %</div>
      <div className={clsx(cell, "w-[30px]")}>2K</div>
      <div className={clsx(cell, "w-[30px]")}>2E</div>
      <div className={clsx(cell, "w-[30px]")}>3D</div>
      <div className={clsx(cell, "w-[30px]")}>3V</div>
      <div className={clsx(cell, "w-[30px]")} />
      <div className="flex h-5 w-[250px] items-center border-r border-[#d7d7d7] pl-1">Mandant: 1 swp-Bau GmbH</div>
    </footer>
  );
}

const Gear = ({ cx, cy, r, fill }: { cx: number; cy: number; r: number; fill: string }) => (
  <>
    <circle cx={cx} cy={cy} r={r} stroke={fill} strokeWidth={r * 0.65} />
    <circle cx={cx} cy={cy} r={r * 1.45} stroke={fill} strokeWidth={r * 0.4} strokeDasharray={`${r * 0.5} ${r * 0.411}`} />
  </>
);

function TaskBar() {
  const item = "flex h-10 shrink-0 items-center justify-center border-b-2";
  const idle = "w-[49px] border-transparent";
  const running = "border-[#76b9ed]";
  return (
    <div className="flex h-10 shrink-0 items-center bg-black text-white">
      <button aria-label="Start" className="flex w-12 justify-center">
        <svg width="16" height="16" fill="#fff"><path d="M0 2.300L6.500 1.400v6.200H0zM7.300 1.300L16 0v7.600H7.300zM0 8.400h6.500v6.200L0 13.700zM7.300 8.400H16V16l-8.700-1.300z" /></svg>
      </button>
      <label className="flex h-10 w-[344px] items-center gap-[9px] border border-[#c8c8c8] bg-[#f0f0f0] pl-3">
        <svg width="17" height="17" fill="none" stroke="#222" strokeWidth="1.300"><circle cx="10.500" cy="6.500" r="5.200" /><path d="M7 10.500L1 16.500" /></svg>
        <input placeholder="Suchbegriff hier eingeben" className="min-w-0 flex-1 bg-transparent text-[15px] outline-none placeholder:text-[#3a3a3a]" />
      </label>
      <button aria-label="Aktive Anwendungen" className={clsx(item, idle)}>
        <svg width="16" height="18" fill="none" stroke="#fff"><path d="M.5 5.500h10v7H.5zM.5 0v2.500h10V0M.5 18v-2.500h10V18M14.500 0v3M14.500 9v9" /><path d="M13 4.500h3v3h-3z" fill="#fff" stroke="none" /></svg>
      </button>
      <button aria-label="Explorer" className={clsx(item, idle)}>
        <Icon>
          <path d="M2 2h7l2 2.500h11V20H2z" fill="#e8a820" />
          <path d="M2 6h20v15H2z" fill="#fbd468" />
          <path d="M6 12h12v10h-3v-4H9v4H6z" fill="#3f9bdf" />
        </Icon>
      </button>
      <button aria-label="Dienste" className={clsx(item, idle)}>
        <Icon><Gear cx={9.500} cy={9.500} r={5.500} fill="#c8dcec" /><Gear cx={19.500} cy={19} r={2.400} fill="#a8c8e0" /></Icon>
      </button>
      <button aria-label="Zertifikate" className={clsx(item, idle)}>
        <Icon>
          <path d="M1 5h15l7 1v17H1z" fill="#f4e3c0" stroke="#c8ad7c" />
          <path d="M14 14h7M14 17h7M14 20h7" stroke="#b8a37c" />
          <circle cx="14" cy="8" r="4" fill="#dfe8ef" />
          <Gear cx={14} cy={8} r={5} fill="#9db4c8" />
          <path d="M5 18l-1 6 3-1.500L10 24l-1-6z" fill="#2f62b8" />
          <circle cx="7" cy="16" r="3.500" fill="#f0b428" />
        </Icon>
      </button>
      <button aria-label="Leistungsüberwachung" className={clsx(item, running, "ml-[6px] w-10")}>
        <Icon>
          <path d="M2 5l16-4v15L2 18z" fill="#aeb9c2" stroke="#7d8992" strokeWidth=".6" />
          <path d="M6 5l16-2v14L6 18z" fill="#e8eef2" stroke="#8d9aa5" />
          <path d="M8 13l3-1 2-5 2 7 2-5 1 3 2-1" stroke="#2a88c0" />
          <path d="M10 18h8l2 4c-3 2-7 2-10 0z" fill="#b8c2ca" />
        </Icon>
      </button>
      <button aria-label="DOCUframe" className={clsx(item, running, "ml-[5px] w-[47px] bg-[#333333]")}><BinderIcon size={22} /></button>
      <button aria-label="Chrome" className={clsx(item, idle)}>
        <Icon>
          <circle cx="12" cy="12" r="12" fill="#fbc116" />
          <path d="M12 12L1.600 6A12 12 0 0 1 22.400 6z" fill="#e33b2e" />
          <path d="M12 0a12 12 0 0 1 10.400 6H12z" fill="#e33b2e" />
          <path d="M1.600 6A12 12 0 0 0 12 24l5.200-9L12 12 6.800 15z" fill="#269a48" />
          <circle cx="12" cy="12" r="5.600" fill="#fff" />
          <circle cx="12" cy="12" r="4.400" fill="#2f7de9" />
        </Icon>
      </button>
      <button aria-label="Auswertung" className={clsx(item, idle)}>
        <Icon>
          <rect x="1.500" y="1.500" width="21" height="21" rx="3.500" fill="#fff" stroke="#efb012" strokeWidth="2" />
          <path d="M5 15h3v5H5zM10 11h4v9h-4zM16 5h3.500v15H16z" fill="#efb012" />
        </Icon>
      </button>
      <button aria-label="Server-Manager" className={clsx(item, running, "ml-[6px] w-10")}>
        <Icon>
          <path d="M1 0h11v23H1z" fill="#2490de" stroke="#b8dcf4" />
          <path d="M1 6h11" stroke="#dff0fb" />
          <path d="M12 12v-1.500h6V12" stroke="#c8d4dc" />
          <rect x="6" y="12.500" width="17.500" height="11" rx="1.500" fill="#7f97a8" stroke="#c8d4dc" />
          <path d="M6 16.500h17.500M10 15.500v2M20 15.500v2" stroke="#dfe8ee" />
        </Icon>
      </button>

      <div className="ml-auto flex h-10 items-center text-xs">
        <svg width="13" height="8" fill="none" stroke="#fff" strokeWidth="1.300"><path d="M.5 7l6-6 6 6" /></svg>
        <svg width="17" height="17" fill="none" className="ml-[9px]">
          <path d="M1 6h2.500L7 2.500v12L3.500 11H1z" stroke="#fff" />
          <circle cx="12" cy="12" r="4.800" fill="#e02030" />
          <path d="M10.300 10.300l3.400 3.400M13.700 10.300l-3.400 3.400" stroke="#fff" strokeWidth="1.300" />
        </svg>
        <svg width="17" height="14" fill="none" stroke="#fff" className="ml-[6px]"><path d="M5 2.500h11.500v8H5M8 13.500h6M11 11v2.500M.5.5h4v5h-4zM2.500 6v5" /></svg>
        <time className="ml-2 w-[58px] text-center leading-[18px]">07:21<br />09.04.2025</time>
        <button aria-label="1 neue Benachrichtigung" className="ml-4 flex w-[38px]">
          <svg width="26" height="30">
            <path d="M1 2h16v13H8l-3 4v-4H1z" fill="#fff" />
            <path d="M4 5.500h10M4 8.500h10M4 11.500h6" stroke="#000" />
            <circle cx="17" cy="21" r="8" fill="#2b2b2b" stroke="#8a8a8a" />
            <text x="17" y="25" textAnchor="middle" fontSize="11" fill="#fff">1</text>
          </svg>
        </button>
        <div className="h-full w-1 border-l border-[#555]" />
      </div>
    </div>
  );
}

export default function App() {
  return (
    <div className={clsx("flex h-screen flex-col overflow-hidden bg-[#f0f0f0] text-black", SEGOE)}>
      <div className="shrink-0 bg-white">
        <TitleBar />
        <MenuBar />
        <Toolbar />
        <SearchRow />
        <ProjectTable />
      </div>
      <DetailPanel />
      <WindowTabs />
      <StatusBar />
      <TaskBar />
    </div>
  );
}
